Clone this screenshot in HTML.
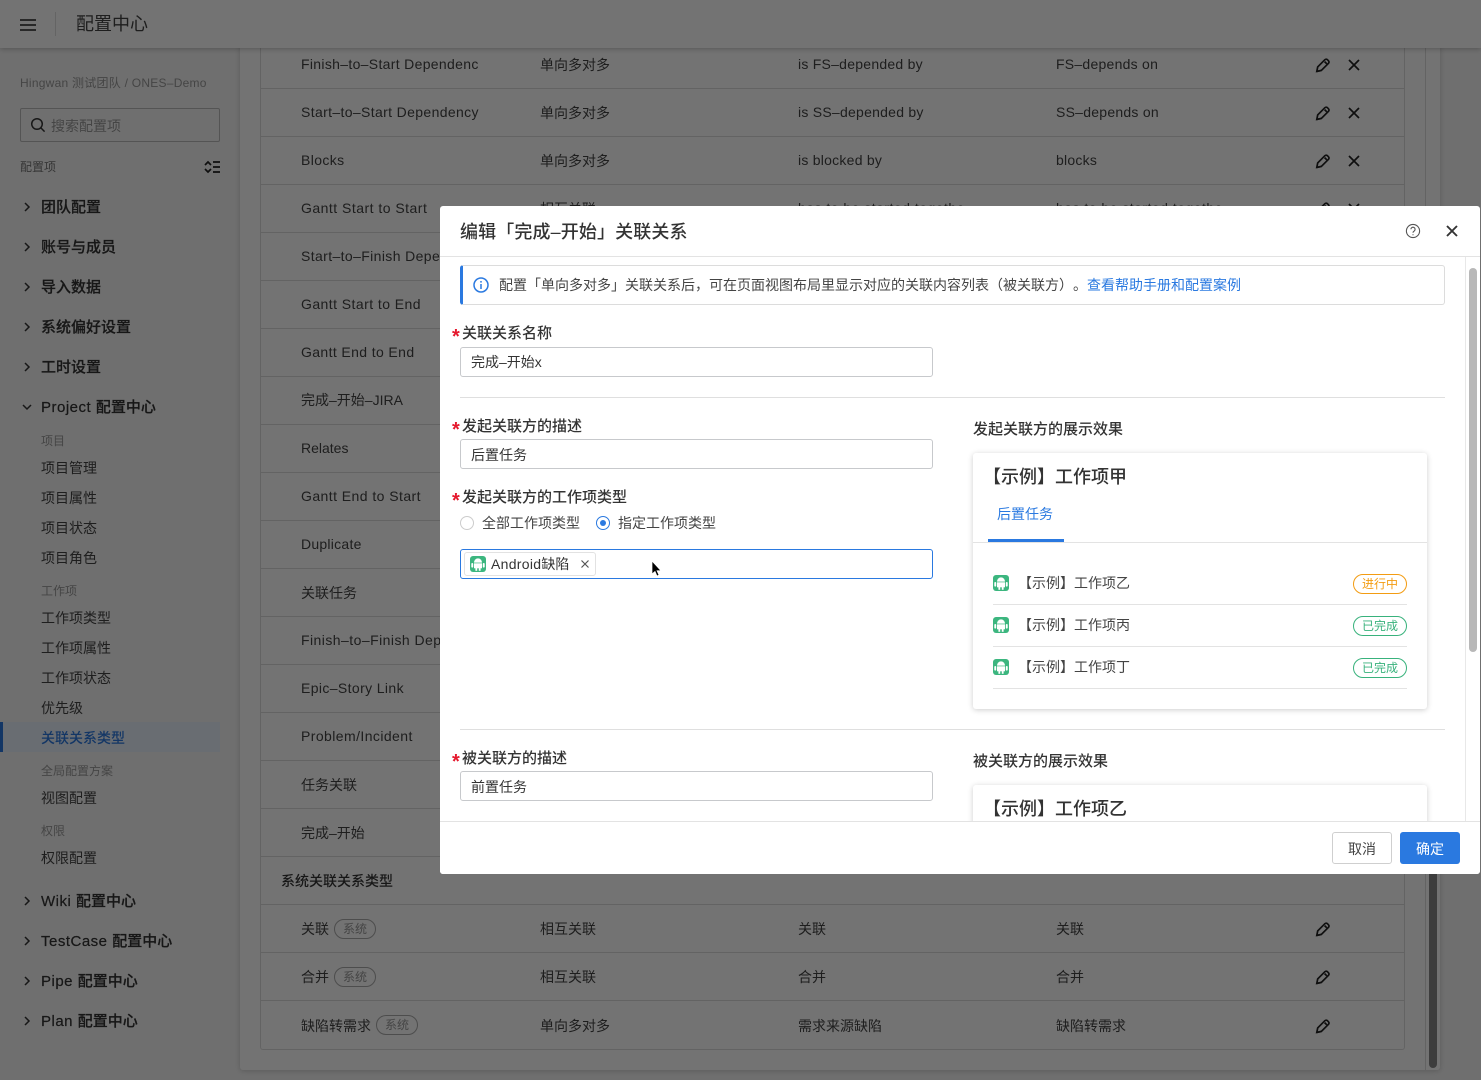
<!DOCTYPE html>
<html lang="zh-CN"><head><meta charset="utf-8"><title>配置中心</title>
<style>
*{box-sizing:border-box}
html,body{margin:0;padding:0;width:1481px;height:1080px;overflow:hidden;background:#f6f6f6;font-family:"Liberation Sans","Noto Sans CJK SC",sans-serif;color:#333;text-spacing-trim:space-all}
.t{position:absolute;white-space:nowrap;line-height:20px;font-size:14px}
.a{position:absolute}
.m{font-size:15px;font-weight:500;color:#333;-webkit-text-stroke:.2px #333}
.m span{letter-spacing:.5px}
.s{left:41px;color:#444}
.l{left:41px;font-size:12px;color:#999}
.c1{left:301px;color:#444}.c2{left:540px;color:#444;margin-top:1px}.c3{left:798px;color:#444}.c4{left:1056px;color:#444}
.e{letter-spacing:.38px}.f{letter-spacing:.25px}
.hl{position:absolute;left:260px;width:1145px;height:1px;background:#dcdcdc}
.ic{position:absolute;width:16px;height:16px;fill:none;stroke:#222;stroke-width:1.7}
.ed{left:1315px}.xx{left:1346px}
.ar{position:absolute;left:22px;width:10px;height:10px;fill:none;stroke:#333;stroke-width:1.5}
.pill{position:absolute;height:20px;width:42px;border:1px solid #aaa;border-radius:10px;font-size:12px;line-height:18px;text-align:center;color:#999}
.inp{position:absolute;left:20px;width:473px;height:30px;border:1px solid #c7c9cc;border-radius:3px;background:#fff;padding-left:10px;font-size:14px;line-height:29px;color:#333}
.lab{position:absolute;left:22px;font-size:15px;line-height:20px;white-space:nowrap;color:#333;font-weight:500}
.lab:before{content:"*";position:absolute;left:-10px;top:3px;color:#e5182d;font-size:20px;font-weight:700;font-family:"Liberation Sans",sans-serif}
.div{position:absolute;left:20px;width:985px;height:1px;background:#dfdfdf}
.rt{position:absolute;left:533px;font-size:15px;line-height:20px;white-space:nowrap;color:#333;font-weight:500}
.row{position:absolute;left:553px;width:414px;height:1px;background:#e3e3e3}
.badge{position:absolute;left:913px;width:54px;height:20px;border:1px solid;border-radius:10px;font-size:12px;line-height:18px;text-align:center}
.o{color:#f39c12;border-color:#f39c12}.g{color:#38b27c;border-color:#38b27c}
.rtx{position:absolute;left:578px;font-size:14px;line-height:20px;white-space:nowrap;color:#444}
.ad{position:absolute;width:16px;height:16px}
</style></head><body>
<svg width="0" height="0" style="position:absolute"><defs>
<symbol id="andr" viewBox="0 0 16 16"><rect width="16" height="16" rx="3" fill="#3cb67f"/><path d="M4 6.6a4 4.2 0 0 1 8 0z" fill="#fff"/><rect x="4" y="7.3" width="8" height="5" fill="#fff"/><rect x="1.3" y="7" width="1.9" height="4.6" rx=".9" fill="#fff"/><rect x="12.8" y="7" width="1.9" height="4.6" rx=".9" fill="#fff"/><rect x="5.4" y="12" width="1.8" height="2.8" fill="#fff"/><rect x="8.8" y="12" width="1.8" height="2.8" fill="#fff"/></symbol>
<symbol id="ped" viewBox="0 0 16 16"><path d="M1.8 14.4l.9-4.5 7.2-7.2a1.8 1.8 0 0 1 2.5 0l1.1 1.1a1.8 1.8 0 0 1 0 2.5l-7.2 7.2z"/><path d="M1.8 14.4l4.2-1M9.6 4.6l2.2 2.2"/></symbol>
<symbol id="pxx" viewBox="0 0 16 16"><path d="M3 3l10 10M13 3L3 13"/></symbol>
<symbol id="par" viewBox="0 0 10 10"><path d="M3 1l4 4-4 4"/></symbol>
</defs></svg>

<!-- header -->
<div class="a" style="left:0;top:0;width:1481px;height:48px;background:#fff;box-shadow:0 1px 5px rgba(0,0,0,.25);z-index:3">
<svg class="a" style="left:20px;top:18px" width="16" height="14" fill="none" stroke="#222" stroke-width="1.6"><path d="M0 2h16M0 7h16M0 12h16"/></svg>
<div class="a" style="left:55px;top:12px;width:1px;height:24px;background:#ddd"></div>
<div class="t" style="left:76px;top:12px;font-size:18px;line-height:24px;color:#444">配置中心</div>
</div>

<!-- sidebar -->
<div class="t" style="left:20px;top:73px;font-size:12px;color:#999;letter-spacing:.25px">Hingwan 测试团队 / ONES–Demo</div>
<div class="a" style="left:20px;top:108px;width:200px;height:34px;border:1px solid #bbb;border-radius:2px"></div>
<svg class="a" style="left:30px;top:117px" width="16" height="16" fill="none" stroke="#333" stroke-width="1.5"><circle cx="7" cy="7" r="5.3"/><path d="M11 11l3.6 3.6"/></svg>
<div class="t" style="left:51px;top:116px;color:#999">搜索配置项</div>
<div class="t" style="left:20px;top:157px;font-size:12px;color:#777">配置项</div>
<svg class="a" style="left:204px;top:160px" width="17" height="14" fill="none" stroke="#222" stroke-width="1.7"><path d="M1 5l3-3 3 3M1 9l3 3 3-3M9 2h7M9 7h7M9 12h7"/></svg>

<svg class="ar" style="top:202px"><use href="#par"/></svg><div class="t m" style="left:41px;top:198px">团队配置</div>
<svg class="ar" style="top:242px"><use href="#par"/></svg><div class="t m" style="left:41px;top:238px">账号与成员</div>
<svg class="ar" style="top:282px"><use href="#par"/></svg><div class="t m" style="left:41px;top:278px">导入数据</div>
<svg class="ar" style="top:322px"><use href="#par"/></svg><div class="t m" style="left:41px;top:318px">系统偏好设置</div>
<svg class="ar" style="top:362px"><use href="#par"/></svg><div class="t m" style="left:41px;top:358px">工时设置</div>
<svg class="ar" style="top:402px;transform:rotate(90deg)"><use href="#par"/></svg><div class="t m" style="left:41px;top:398px"><span>Project </span>配置中心</div>
<div class="t l" style="top:431px">项目</div>
<div class="t s" style="top:458px">项目管理</div>
<div class="t s" style="top:488px">项目属性</div>
<div class="t s" style="top:518px">项目状态</div>
<div class="t s" style="top:548px">项目角色</div>
<div class="t l" style="top:581px">工作项</div>
<div class="t s" style="top:608px">工作项类型</div>
<div class="t s" style="top:638px">工作项属性</div>
<div class="t s" style="top:668px">工作项状态</div>
<div class="t s" style="top:698px">优先级</div>
<div class="a" style="left:0;top:722px;width:220px;height:30px;background:#e9f1fd;border-left:3px solid #2a79e0"></div>
<div class="t s" style="top:728px;color:#2a79e0;font-weight:500">关联关系类型</div>
<div class="t l" style="top:761px">全局配置方案</div>
<div class="t s" style="top:788px">视图配置</div>
<div class="t l" style="top:821px">权限</div>
<div class="t s" style="top:848px">权限配置</div>
<svg class="ar" style="top:896px"><use href="#par"/></svg><div class="t m" style="left:41px;top:892px"><span>Wiki </span>配置中心</div>
<svg class="ar" style="top:936px"><use href="#par"/></svg><div class="t m" style="left:41px;top:932px"><span>TestCase </span>配置中心</div>
<svg class="ar" style="top:976px"><use href="#par"/></svg><div class="t m" style="left:41px;top:972px"><span>Pipe </span>配置中心</div>
<svg class="ar" style="top:1016px"><use href="#par"/></svg><div class="t m" style="left:41px;top:1012px"><span>Plan </span>配置中心</div>

<!-- main card -->
<div class="a" style="left:240px;top:40px;width:1200px;height:1030px;background:#fff;box-shadow:0 1px 6px rgba(0,0,0,.18);border-radius:3px"></div>
<div class="a" style="left:260px;top:40px;width:1145px;height:1010px;border:1px solid #dcdcdc;border-radius:3px"></div>
<div class="a" style="left:1425px;top:40px;width:1px;height:1030px;background:#dcdcdc"></div>
<div class="a" style="left:1429px;top:600px;width:8px;height:468px;background:#888;border-radius:4px"></div>

<div class="hl" style="top:88px"></div><div class="hl" style="top:136px"></div><div class="hl" style="top:184px"></div><div class="hl" style="top:232px"></div><div class="hl" style="top:280px"></div><div class="hl" style="top:328px"></div><div class="hl" style="top:376px"></div><div class="hl" style="top:424px"></div><div class="hl" style="top:472px"></div><div class="hl" style="top:520px"></div><div class="hl" style="top:568px"></div><div class="hl" style="top:616px"></div><div class="hl" style="top:664px"></div><div class="hl" style="top:712px"></div><div class="hl" style="top:760px"></div><div class="hl" style="top:808px"></div><div class="hl" style="top:856px"></div><div class="hl" style="top:904px"></div><div class="hl" style="top:952px"></div><div class="hl" style="top:1000px"></div>

<div class="t c1 e" style="top:54px;letter-spacing:.32px">Finish–to–Start Dependenc</div><div class="t c2" style="top:54px">单向多对多</div><div class="t c3 f" style="top:54px">is FS–depended by</div><div class="t c4 f" style="top:54px">FS–depends on</div>
<svg class="ic ed" style="top:57px"><use href="#ped"/></svg><svg class="ic xx" style="top:57px"><use href="#pxx"/></svg>
<div class="t c1 e" style="top:102px;letter-spacing:.36px">Start–to–Start Dependency</div><div class="t c2" style="top:102px">单向多对多</div><div class="t c3 f" style="top:102px">is SS–depended by</div><div class="t c4 f" style="top:102px">SS–depends on</div>
<svg class="ic ed" style="top:105px"><use href="#ped"/></svg><svg class="ic xx" style="top:105px"><use href="#pxx"/></svg>
<div class="t c1 e" style="top:150px">Blocks</div><div class="t c2" style="top:150px">单向多对多</div><div class="t c3 f" style="top:150px">is blocked by</div><div class="t c4 f" style="top:150px">blocks</div>
<svg class="ic ed" style="top:153px"><use href="#ped"/></svg><svg class="ic xx" style="top:153px"><use href="#pxx"/></svg>
<div class="t c1 e" style="top:198px;letter-spacing:.48px">Gantt Start to Start</div><div class="t c2" style="top:198px">相互关联</div><div class="t c3 e" style="top:198px;letter-spacing:.48px">has to be started togethe</div><div class="t c4 e" style="top:198px;letter-spacing:.48px">has to be started togethe</div>
<svg class="ic ed" style="top:201px"><use href="#ped"/></svg><svg class="ic xx" style="top:201px"><use href="#pxx"/></svg>
<div class="t c1 e" style="top:246px">Start–to–Finish Dependency</div>
<div class="t c1 e" style="top:294px;letter-spacing:.44px">Gantt Start to End</div>
<div class="t c1 e" style="top:342px;letter-spacing:.38px">Gantt End to End</div>
<div class="t c1" style="top:390px">完成–开始–JIRA</div>
<div class="t c1" style="top:438px">Relates</div>
<div class="t c1 e" style="top:486px;letter-spacing:.44px">Gantt End to Start</div>
<div class="t c1 f" style="top:534px">Duplicate</div>
<div class="t c1" style="top:583px">关联任务</div>
<div class="t c1 e" style="top:630px;letter-spacing:.45px">Finish–to–Finish Dependency</div>
<div class="t c1 e" style="top:678px">Epic–Story Link</div>
<div class="t c1 e" style="top:726px;letter-spacing:.42px">Problem/Incident</div>
<div class="t c1" style="top:775px">任务关联</div>
<div class="t c1" style="top:823px">完成–开始</div>
<div class="t" style="left:281px;top:871px;font-weight:500;color:#333">系统关联关系类型</div>

<div class="t c1" style="top:919px">关联</div><div class="pill" style="left:334px;top:919px">系统</div><div class="t c2" style="top:918px">相互关联</div><div class="t c3" style="top:919px">关联</div><div class="t c4" style="top:919px">关联</div>
<svg class="ic ed" style="top:921px"><use href="#ped"/></svg>
<div class="t c1" style="top:967px">合并</div><div class="pill" style="left:334px;top:967px">系统</div><div class="t c2" style="top:966px">相互关联</div><div class="t c3" style="top:967px">合并</div><div class="t c4" style="top:967px">合并</div>
<svg class="ic ed" style="top:969px"><use href="#ped"/></svg>
<div class="t c1" style="top:1016px">缺陷转需求</div><div class="pill" style="left:376px;top:1015px">系统</div><div class="t c2" style="top:1015px">单向多对多</div><div class="t c3" style="top:1016px">需求来源缺陷</div><div class="t c4" style="top:1016px">缺陷转需求</div>
<svg class="ic ed" style="top:1018px"><use href="#ped"/></svg>

<!-- overlay -->
<div class="a" style="left:0;top:0;width:1481px;height:1080px;background:rgba(0,0,0,.55);z-index:5"></div>

<!-- modal -->
<div class="a" style="left:440px;top:206px;width:1040px;height:668px;background:#fff;border-radius:3px;z-index:6;overflow:hidden">
 <div class="t" style="left:20px;top:13px;font-size:18px;line-height:26px;font-weight:500;color:#333;letter-spacing:.12px">编辑「完成–开始」关联关系</div>
 <svg class="a" style="left:965px;top:17px" width="16" height="16" fill="none" stroke="#555" stroke-width="1.1"><circle cx="8" cy="8" r="6.6"/><path d="M5.9 6.3a2.1 2.1 0 1 1 3.2 1.8c-.7.4-1.1.8-1.1 1.6"/><path d="M8 11.2v1"/></svg>
 <svg class="a" style="left:1005px;top:18px" width="14" height="14" fill="none" stroke="#333" stroke-width="1.9"><path d="M2 2l10 10M12 2L2 12"/></svg>
 <div class="a" style="left:0;top:50px;width:1040px;height:1px;background:#e3e3e3"></div>

 <div class="a" style="left:1025px;top:51px;width:1px;height:565px;background:#e8e8e8"></div>
 <div class="a" style="left:1029px;top:62px;width:8px;height:384px;background:#b8b8b8;border-radius:4px"></div>

 <div class="a" style="left:20px;top:59px;width:985px;height:40px;border:1px solid #dcdcdc;border-left:3px solid #2a79e0;border-radius:3px"></div>
 <svg class="a" style="left:33px;top:71px" width="16" height="16" fill="none" stroke="#2a79e0" stroke-width="1.5"><circle cx="8" cy="8" r="7"/><path d="M8 7v5M8 4v1.6"/></svg>
 <div class="t" style="left:59px;top:69px;color:#444">配置「单向多对多」关联关系后，可在页面视图布局里显示对应的关联内容列表（被关联方）。<span style="color:#2a79e0">查看帮助手册和配置案例</span></div>

 <div class="lab" style="top:118px">关联关系名称</div>
 <div class="inp" style="top:141px">完成–开始x</div>
 <div class="div" style="top:191px"></div>

 <div class="lab" style="top:211px">发起关联方的描述</div>
 <div class="inp" style="top:233px;line-height:30px">后置任务</div>
 <div class="lab" style="top:282px">发起关联方的工作项类型</div>
 <div class="a" style="left:20px;top:310px;width:14px;height:14px;border:1px solid #ccc;border-radius:50%"></div>
 <div class="t" style="left:42px;top:307px;color:#444">全部工作项类型</div>
 <div class="a" style="left:156px;top:310px;width:14px;height:14px;border:1px solid #2a79e0;border-radius:50%"></div>
 <div class="a" style="left:160px;top:314px;width:6px;height:6px;background:#2a79e0;border-radius:50%"></div>
 <div class="t" style="left:178px;top:307px;color:#444">指定工作项类型</div>
 <div class="a" style="left:20px;top:343px;width:473px;height:30px;border:1px solid #2a79e0;border-radius:3px"></div>
 <div class="a" style="left:24px;top:346px;width:132px;height:24px;border:1px solid #e2e2e2;border-radius:3px"></div>
 <svg class="ad" style="left:30px;top:350px"><use href="#andr"/></svg>
 <div class="t" style="left:51px;top:348px;color:#333"><span style="letter-spacing:.3px">Android</span>缺陷</div>
 <svg class="a" style="left:141px;top:354px" width="8" height="8" fill="none" stroke="#555" stroke-width="1.2"><path d="M.5.5l7 7M7.5.5l-7 7"/></svg>
 <svg class="a" style="left:211px;top:355px" width="11" height="17"><path d="M1 0v13l3-2.6 2 4.6 2-.9-2-4.4h4z" fill="#000" stroke="#fff" stroke-width=".7"/></svg>

 <div class="rt" style="top:214px">发起关联方的展示效果</div>
 <div class="a" style="left:533px;top:247px;width:454px;height:256px;background:#fff;border-radius:3px;box-shadow:0 1px 6px rgba(0,0,0,.2)"></div>
 <div class="t" style="left:543px;top:258px;font-size:18px;line-height:26px;font-weight:500;color:#333">【示例】工作项甲</div>
 <div class="t" style="left:557px;top:298px;color:#2a79e0">后置任务</div>
 <div class="a" style="left:533px;top:336px;width:454px;height:1px;background:#e3e3e3"></div>
 <div class="a" style="left:548px;top:333px;width:76px;height:3px;background:#2a79e0"></div>

 <svg class="ad" style="left:553px;top:369px"><use href="#andr"/></svg>
 <div class="rtx" style="left:578px;top:367px">【示例】工作项乙</div>
 <div class="badge o" style="top:368px">进行中</div>
 <div class="row" style="top:398px"></div>
 <svg class="ad" style="left:553px;top:411px"><use href="#andr"/></svg>
 <div class="rtx" style="left:578px;top:409px">【示例】工作项丙</div>
 <div class="badge g" style="top:410px">已完成</div>
 <div class="row" style="top:440px"></div>
 <svg class="ad" style="left:553px;top:453px"><use href="#andr"/></svg>
 <div class="rtx" style="left:578px;top:451px">【示例】工作项丁</div>
 <div class="badge g" style="top:452px">已完成</div>
 <div class="row" style="top:482px"></div>

 <div class="div" style="top:523px"></div>
 <div class="lab" style="top:543px">被关联方的描述</div>
 <div class="inp" style="top:565px;line-height:30px">前置任务</div>
 <div class="rt" style="top:546px">被关联方的展示效果</div>
 <div class="a" style="left:533px;top:579px;width:454px;height:100px;background:#fff;border-radius:3px;box-shadow:0 1px 6px rgba(0,0,0,.2)"></div>
 <div class="t" style="left:543px;top:590px;font-size:18px;line-height:26px;font-weight:500;color:#333">【示例】工作项乙</div>

 <div class="a" style="left:0;top:615px;width:1040px;height:53px;background:#fff;border-top:1px solid #e3e3e3"></div>
 <div class="a" style="left:892px;top:626px;width:60px;height:32px;border:1px solid #cfcfcf;border-radius:3px;background:#fff;text-align:center;font-size:14px;line-height:32px;color:#444">取消</div>
 <div class="a" style="left:960px;top:626px;width:60px;height:32px;border-radius:3px;background:#2a79e0;text-align:center;font-size:14px;line-height:34px;color:#fff">确定</div>
</div>
</body></html>
